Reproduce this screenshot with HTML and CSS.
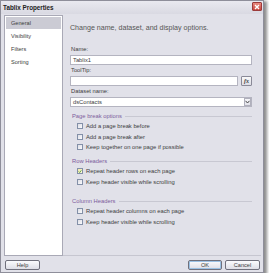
FILE: index.html
```html
<!DOCTYPE html>
<html>
<head>
	<meta charset="UTF-8">
	<title>Tablix Properties</title>
	<link rel="stylesheet" href="styles.css">
</head>
<body>
<div class="win">
	<div class="titlebar">
		<span class="title">Tablix Properties</span>
		<span class="close">
			<svg width="6" height="6" viewBox="0 0 6 6"><path d="M1 1L5 5M5 1L1 5" stroke="#fff" stroke-width="1.4"/></svg>
		</span>
	</div>
	<div class="main">
		<ul class="nav">
			<li class="sel">General</li>
			<li>Visibility</li>
			<li>Filters</li>
			<li>Sorting</li>
		</ul>
		<div class="panel">
			<div class="heading">Change name, dataset, and display options.</div>

			<div class="label first">Name:</div>
			<div class="field">Tablix1</div>

			<div class="label">ToolTip:</div>
			<div class="fieldrow">
				<div class="field grow"></div>
				<span class="fx">fx</span>
			</div>

			<div class="label">Dataset name:</div>
			<div class="field select">
				<span>dsContacts</span>
				<span class="arrow">
					<svg width="5" height="4" viewBox="0 0 5 4"><path d="M0.5 0.8L2.5 3L4.5 0.8" fill="none" stroke="#444" stroke-width="1"/></svg>
				</span>
			</div>

			<div class="group g1"><span>Page break options</span></div>
			<ul class="checks">
				<li><i class="box"></i>Add a page break before</li>
				<li><i class="box"></i>Add a page break after</li>
				<li><i class="box"></i>Keep together on one page if possible</li>
			</ul>

			<div class="group g2"><span>Row Headers</span></div>
			<ul class="checks">
				<li><i class="box on"><svg width="6" height="6" viewBox="0 0 6 6"><path d="M1 3L2.5 4.5L5 1.2" fill="none" stroke="#3a8a2a" stroke-width="1.2"/></svg></i>Repeat header rows on each page</li>
				<li><i class="box"></i>Keep header visible while scrolling</li>
			</ul>

			<div class="group g3"><span>Column Headers</span></div>
			<ul class="checks">
				<li><i class="box"></i>Repeat header columns on each page</li>
				<li><i class="box"></i>Keep header visible while scrolling</li>
			</ul>
		</div>
	</div>
	<div class="footer">
		<span class="btn help">Help</span>
		<span class="spacer"></span>
		<span class="btn ok">OK</span>
		<span class="btn">Cancel</span>
	</div>
</div>
</body>
</html>
```

FILE: styles.css
```css
body,ul,li{
	padding: 0;
	margin: 0;
}
li{
	list-style: none;
}
body{
	background: #fff;
	font-family: "Liberation Sans", Arial, sans-serif;
	font-size: 6px;
	color: #3c3c3c;
}

.win{
	width: 264px;
	height: 273px;
	box-sizing: border-box;
	border: 1px solid #8e8e9a;
	background: #e1e1e9;
	box-shadow: 2px 2px 3px 1px rgba(0,0,0,0.45);
	display: flex;
	flex-direction: column;
}

.titlebar{
	height: 13px;
	display: flex;
	align-items: center;
	justify-content: space-between;
	padding: 0 1px 0 2px;
	background: linear-gradient(#e9e9f0, #d9d9e2);
}
.title{
	font-weight: bold;
	font-size: 6.3px;
	color: #222;
}
.close{
	width: 10px;
	height: 9px;
	margin-top: -2px;
	box-sizing: border-box;
	border: 1px solid #9c3b3b;
	border-radius: 1px;
	background: linear-gradient(#e98a80, #c9453d);
	display: flex;
	align-items: center;
	justify-content: center;
}

.main{
	display: flex;
	padding: 1px 2px 0 3px;
}
.nav{
	width: 59px;
	height: 241px;
	box-sizing: border-box;
	background: #fff;
	border: 1px solid #a9a9b6;
	padding: 1px 1px 0 1px;
}
.nav li{
	height: 13px;
	line-height: 12px;
	padding-left: 5px;
	font-size: 5.6px;
}
.nav .sel{
	background: #cbcbd4;
	height: 12px;
	margin-bottom: 1px;
}

.panel{
	flex: 1;
	padding: 0 9px 0 7px;
	border-bottom: 1px solid #c6c6d0;
	height: 240px;
}
.heading{
	margin-top: 8px;
	font-size: 7.1px;
	line-height: 10px;
	color: #555;
}
.label{
	margin-top: 1px;
	line-height: 8px;
	padding-left: 1px;
	font-size: 5.8px;
}
.label.first{
	margin-top: 12px;
}
.field{
	margin-top: 2px;
	height: 10px;
	box-sizing: border-box;
	border: 1px solid #b4b4c0;
	background: #fff;
	padding-left: 2px;
	line-height: 8px;
	font-size: 5.8px;
}
.fieldrow{
	display: flex;
	align-items: flex-end;
	gap: 3px;
}
.fieldrow .grow{
	flex: 1;
}
.fx{
	width: 11px;
	height: 10px;
	box-sizing: border-box;
	border: 1px solid #8a8a98;
	border-radius: 1px;
	background: linear-gradient(#fafafa, #dcdce4);
	font: italic bold 6px/8px "Liberation Serif", serif;
	text-align: center;
}
.select{
	display: flex;
	justify-content: space-between;
	align-items: center;
	padding-right: 0;
}
.arrow{
	width: 7px;
	height: 8px;
	box-sizing: border-box;
	border: 1px solid #b0b0bc;
	background: linear-gradient(#f6f6f9, #e2e2ea);
	display: flex;
	align-items: center;
	justify-content: center;
}

.group{
	display: flex;
	align-items: center;
	gap: 3px;
	line-height: 8px;
	padding-left: 2px;
	color: #7d5c9c;
	font-size: 5.8px;
}
.group::after{
	content: "";
	flex: 1;
	border-top: 1px solid #c8c8d2;
}
.g1{
	margin-top: 5px;
}
.g2{
	margin-top: 4.5px;
}
.g3{
	margin-top: 10px;
}
.checks{
	margin-top: 1px;
}
.checks li{
	height: 10.5px;
	display: flex;
	align-items: center;
	padding-left: 7px;
	font-size: 5.8px;
}
.box{
	width: 6px;
	height: 6px;
	box-sizing: border-box;
	border: 1px solid #8390a8;
	background: linear-gradient(135deg, #dcdde4, #fbfbfd);
	margin-right: 3px;
	display: flex;
	align-items: center;
	justify-content: center;
}
.box.on{
	background: linear-gradient(135deg, #f2e9a2, #fffbe0);
}
.box svg{
	width: 5px;
	height: 5px;
}

.footer{
	display: flex;
	gap: 3px;
	padding: 4px 3px 0 4px;
}
.spacer{
	flex: 1;
}
.btn{
	width: 35px;
	height: 10px;
	box-sizing: border-box;
	border: 1px solid #70707c;
	border-radius: 2px;
	background: linear-gradient(#fbfbfd, #dedee6);
	text-align: center;
	line-height: 8px;
	font-size: 5.6px;
}
.ok{
	width: 34px;
	box-shadow: inset 0 0 0 1px #9bc1e4;
}
```
